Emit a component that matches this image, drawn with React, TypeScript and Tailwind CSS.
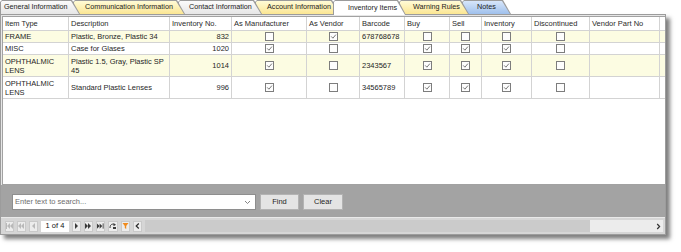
import React from "react";

type Tone = "gray" | "yellow" | "white" | "blue";

const toneBg: Record<Tone, string> = {
  gray: "bg-gradient-to-b from-[#fbfbfb] to-[#e6e6e6]",
  yellow: "bg-gradient-to-b from-[#fffbd6] to-[#fbe692]",
  white: "bg-white",
  blue: "bg-gradient-to-b from-[#d7e6fa] to-[#9fc0ec]",
};

const tabs: { label: string; w: string; pl: string; z: string; tone: Tone }[] = [
  { label: "General Information", w: "w-[80px]", pl: "pl-[3px]", z: "z-[7]", tone: "gray" },
  { label: "Communication Information", w: "w-[112px]", pl: "pl-[11px]", z: "z-[6]", tone: "yellow" },
  { label: "Contact Information", w: "w-[84px]", pl: "pl-[10px]", z: "z-[5]", tone: "gray" },
  { label: "Account Information", w: "w-[85px]", pl: "pl-[11px]", z: "z-[4]", tone: "yellow" },
  { label: "Inventory Items", w: "w-[73px]", pl: "pl-[14px]", z: "z-[9]", tone: "white" },
  { label: "Warning Rules", w: "w-[70px]", pl: "pl-[13px]", z: "z-[3]", tone: "yellow" },
  { label: "Notes", w: "w-[49px]", pl: "pl-[14px]", z: "z-[2]", tone: "blue" },
];

const cols = [
  { label: "Item Type", w: "w-[66px]" },
  { label: "Description", w: "w-[101px]" },
  { label: "Inventory No.", w: "w-[62px]" },
  { label: "As Manufacturer", w: "w-[75px]" },
  { label: "As Vendor", w: "w-[53px]" },
  { label: "Barcode", w: "w-[45px]" },
  { label: "Buy", w: "w-[45px]" },
  { label: "Sell", w: "w-[32px]" },
  { label: "Inventory", w: "w-[50px]" },
  { label: "Discontinued", w: "w-[58px]" },
  { label: "Vendor Part No", w: "w-[70px]" },
  { label: "", w: "w-[80px]" },
];

type Item = {
  type: string[];
  desc: string[];
  inv: string;
  checks: [boolean, boolean];
  barcode: string;
  flags: [boolean, boolean, boolean, boolean];
  h: string;
  alt: boolean;
};

const items: Item[] = [
  { type: ["FRAME"], desc: ["Plastic, Bronze, Plastic 34"], inv: "832", checks: [false, true], barcode: "678768678", flags: [false, false, false, false], h: "h-[12px]", alt: true },
  { type: ["MISC"], desc: ["Case for Glases"], inv: "1020", checks: [true, false], barcode: "", flags: [true, true, true, false], h: "h-[12px]", alt: false },
  { type: ["OPHTHALMIC", "LENS"], desc: ["Plastic 1.5, Gray, Plastic SP", "45"], inv: "1014", checks: [true, false], barcode: "2343567", flags: [true, true, true, false], h: "h-[22px]", alt: true },
  { type: ["OPHTHALMIC", "LENS"], desc: ["Standard Plastic Lenses"], inv: "996", checks: [true, false], barcode: "34565789", flags: [true, true, true, false], h: "h-[22px]", alt: false },
];

function Check({ on }: { on: boolean }) {
  return (
    <svg width="9" height="9" viewBox="0 0 9 9">
      <rect x="0.5" y="0.5" width="8" height="8" fill="#fdfdfd" stroke="#7d7d7d" />
      {on && <path d="M2.2 4.4 L3.9 6.2 L6.9 2.6" fill="none" stroke="#6a6a6a" strokeWidth="0.9" />}
    </svg>
  );
}

function Lines({ lines }: { lines: string[] }) {
  return (
    <div className="leading-[9px]">
      {lines.map((l, i) => (
        <div key={i}>{l}</div>
      ))}
    </div>
  );
}

function Cell({ w, children, className = "" }: { w: string; children?: React.ReactNode; className?: string }) {
  return (
    <div className={`${w} flex shrink-0 items-center overflow-hidden whitespace-nowrap border-r border-[#d3d3d3] px-[2px] ${className}`}>
      {children}
    </div>
  );
}

function Tri({ dir, x, color }: { dir: "l" | "r"; x: number; color: string }) {
  const d = dir === "l" ? `M${x + 3} 2 L${x} 5 L${x + 3} 8 Z` : `M${x} 2 L${x + 3} 5 L${x} 8 Z`;
  return <path d={d} fill={color} />;
}

function PagerBtn({ children, w = "w-[9px]" }: { children: React.ReactNode; w?: string }) {
  return (
    <div className={`${w} flex h-[11px] shrink-0 items-center justify-center border border-[#c9c9c9] bg-[#ececec]`}>
      {children}
    </div>
  );
}

export default function App() {
  const dis = "#b9b9b9";
  const on = "#3a3a3a";
  return (
    <div className="h-[252px] w-[681px] overflow-hidden bg-white font-['Liberation_Sans',Arial,sans-serif] text-[7.5px] text-[#1f1f1f]">
      <div className="relative z-10 flex h-[14px] items-start text-[7.2px]">
        {tabs.map((t, i) => (
          <div
            key={t.label}
            className={`relative shrink-0 ${t.w} ${t.z} ${i === 0 ? "" : "-ml-[7px]"} ${t.tone === "white" ? "h-[15px]" : "h-[14px]"} bg-[#9b9b9b] [clip-path:polygon(0_2px,2px_0,calc(100%_-_8px)_0,100%_100%,0_100%)]`}
          >
            <div
              className={`absolute bottom-0 left-[1px] right-[1px] top-[1px] flex items-center ${t.pl} ${toneBg[t.tone]} [clip-path:polygon(0_1px,1px_0,calc(100%_-_8px)_0,100%_100%,0_100%)]`}
            >
              <span className="text-[#222]">{t.label}</span>
            </div>
          </div>
        ))}
      </div>

      <div className="flex h-[221px] w-[666px] flex-col border border-[#9c9c9c] bg-[#e6e6e6] shadow-[4px_4px_4px_rgba(0,0,0,0.5)]">
        <div className="ml-[1px] mt-[1px] flex h-[169px] flex-col overflow-hidden border-b border-l border-t border-[#a2a2a2] bg-white">
          <div className="flex h-[14px] shrink-0 border-b border-[#d3d3d3] text-[#2a2a2a]">
            {cols.map((c, i) => (
              <Cell key={i} w={c.w}>
                {c.label}
              </Cell>
            ))}
          </div>
          {items.map((it, i) => (
            <div key={i} className={`flex shrink-0 border-b border-[#d3d3d3] ${it.h} ${it.alt ? "bg-[#fcfce2]" : "bg-white"}`}>
              <Cell w="w-[66px]">
                <Lines lines={it.type} />
              </Cell>
              <Cell w="w-[101px]">
                <Lines lines={it.desc} />
              </Cell>
              <Cell w="w-[62px]" className="justify-end">
                {it.inv}
              </Cell>
              <Cell w="w-[75px]" className="justify-center">
                <Check on={it.checks[0]} />
              </Cell>
              <Cell w="w-[53px]" className="justify-center">
                <Check on={it.checks[1]} />
              </Cell>
              <Cell w="w-[45px]">{it.barcode}</Cell>
              <Cell w="w-[45px]" className="justify-center">
                <Check on={it.flags[0]} />
              </Cell>
              <Cell w="w-[32px]" className="justify-center">
                <Check on={it.flags[1]} />
              </Cell>
              <Cell w="w-[50px]" className="justify-center">
                <Check on={it.flags[2]} />
              </Cell>
              <Cell w="w-[58px]" className="justify-center">
                <Check on={it.flags[3]} />
              </Cell>
              <Cell w="w-[70px]" />
              <Cell w="w-[80px]" />
            </div>
          ))}
        </div>

        <div className="flex h-[32px] shrink-0 items-start gap-[4px] bg-[#a3a3a3] pl-[11px] pt-[9px]">
          <div className="flex h-[16px] w-[244px] items-center justify-between border border-[#8e8e8e] bg-white pl-[2px] pr-[4px] text-[#6e6e6e]">
            <span>Enter text to search...</span>
            <svg width="7" height="5" viewBox="0 0 7 5">
              <path d="M1 1 L3.5 3.5 L6 1" fill="none" stroke="#777" strokeWidth="0.9" />
            </svg>
          </div>
          <div className="flex h-[16px] w-[39px] items-center justify-center border border-[#b3b3b3] bg-[#e4e4e4]">Find</div>
          <div className="flex h-[16px] w-[40px] items-center justify-center border border-[#b3b3b3] bg-[#e4e4e4]">Clear</div>
        </div>

        <div className="flex h-[17px] shrink-0 items-center gap-[3px] border-t border-[#e9e9e9] bg-[#d6d6d6] pl-[4px] pr-[2px]">
          <PagerBtn>
            <svg width="7" height="10" viewBox="0 0 7 10">
              <rect x="0" y="2" width="1" height="6" fill={dis} />
              <Tri dir="l" x={1} color={dis} />
              <Tri dir="l" x={4} color={dis} />
            </svg>
          </PagerBtn>
          <PagerBtn>
            <svg width="7" height="10" viewBox="0 0 7 10">
              <Tri dir="l" x={0} color={dis} />
              <Tri dir="l" x={3} color={dis} />
            </svg>
          </PagerBtn>
          <PagerBtn>
            <svg width="5" height="10" viewBox="0 0 5 10">
              <Tri dir="l" x={1} color={dis} />
            </svg>
          </PagerBtn>
          <div className="flex h-[11px] w-[28px] shrink-0 items-center justify-center bg-white text-[#111]">1 of 4</div>
          <PagerBtn>
            <svg width="5" height="10" viewBox="0 0 5 10">
              <Tri dir="r" x={1} color={on} />
            </svg>
          </PagerBtn>
          <PagerBtn>
            <svg width="7" height="10" viewBox="0 0 7 10">
              <Tri dir="r" x={0} color={on} />
              <Tri dir="r" x={3} color={on} />
            </svg>
          </PagerBtn>
          <PagerBtn>
            <svg width="8" height="10" viewBox="0 0 8 10">
              <Tri dir="r" x={0} color={on} />
              <Tri dir="r" x={3} color={on} />
              <rect x="6.5" y="2" width="1" height="6" fill={on} />
            </svg>
          </PagerBtn>
          <PagerBtn w="w-[10px]">
            <svg width="8" height="8" viewBox="0 0 8 8">
              <path d="M1 6 C1 2.5 3 1.5 5.5 2.5" fill="none" stroke={on} strokeWidth="1" />
              <path d="M4.5 1 L7 2.8 L4.5 4.2 Z" fill={on} />
              <rect x="4" y="5" width="3" height="2" fill={on} />
            </svg>
          </PagerBtn>
          <PagerBtn>
            <svg width="7" height="8" viewBox="0 0 7 8">
              <path d="M0.5 1 L6.5 1 L4.2 4 L4.2 7 L2.8 6 L2.8 4 Z" fill="#f08a1c" />
            </svg>
          </PagerBtn>
          <PagerBtn>
            <svg width="5" height="8" viewBox="0 0 5 8">
              <path d="M3.8 1.5 L1.2 4 L3.8 6.5" fill="none" stroke="#2a2a2a" strokeWidth="1.2" />
            </svg>
          </PagerBtn>
          <div className="flex h-[12px] flex-1 items-stretch">
            <div className="w-[445px] bg-[#cbcbcb]" />
            <div className="flex flex-1 items-center justify-end bg-[#ececec] pr-[2px]">
              <svg width="5" height="7" viewBox="0 0 5 7">
                <path d="M1.2 1 L3.6 3.5 L1.2 6" fill="none" stroke="#333" strokeWidth="1.2" />
              </svg>
            </div>
          </div>
        </div>
      </div>
    </div>
  );
}
